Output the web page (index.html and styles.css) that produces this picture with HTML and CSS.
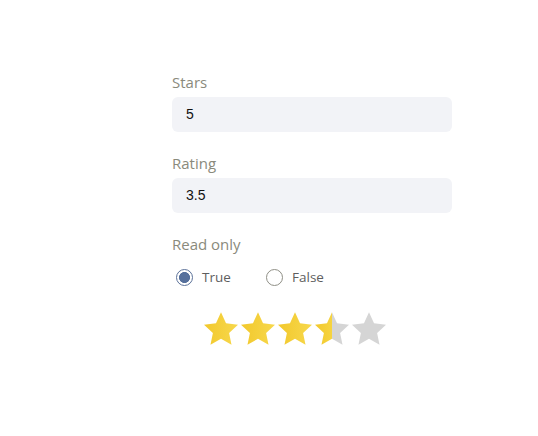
FILE: index.html
```html
<!DOCTYPE html>
<html>
<head>
<meta charset="utf-8">
<link rel="stylesheet" href="styles.css">
</head>
<body>
<div class="form">
  <div class="field">
    <div class="label">Stars</div>
    <div class="input">5</div>
  </div>
  <div class="field">
    <div class="label">Rating</div>
    <div class="input">3.5</div>
  </div>
  <div class="field">
    <div class="label">Read only</div>
    <div class="radios">
      <label class="radio"><span class="dot checked"></span>True</label>
      <label class="radio"><span class="dot"></span>False</label>
    </div>
  </div>
  <div class="stars">
    <svg class="star" viewBox="1.5 1.5 21 20.1"><defs><linearGradient id="g" x1="0" x2="1"><stop offset="0" stop-color="#f2c82c"/><stop offset="1" stop-color="#f7d84c"/></linearGradient><linearGradient id="h" x1="0" x2="1"><stop offset="0" stop-color="#f2c82c"/><stop offset="0.5" stop-color="#f6d440"/><stop offset="0.5" stop-color="#d5d5d5"/><stop offset="1" stop-color="#d5d5d5"/></linearGradient></defs><polygon fill="url(#g)" points="12,1.5 15.1,8.3 22.5,9.2 17,14.3 18.5,21.6 12,17.9 5.5,21.6 7,14.3 1.5,9.2 8.9,8.3"/></svg>
    <svg class="star" viewBox="1.5 1.5 21 20.1"><polygon fill="url(#g)" points="12,1.5 15.1,8.3 22.5,9.2 17,14.3 18.5,21.6 12,17.9 5.5,21.6 7,14.3 1.5,9.2 8.9,8.3"/></svg>
    <svg class="star" viewBox="1.5 1.5 21 20.1"><polygon fill="url(#g)" points="12,1.5 15.1,8.3 22.5,9.2 17,14.3 18.5,21.6 12,17.9 5.5,21.6 7,14.3 1.5,9.2 8.9,8.3"/></svg>
    <svg class="star" viewBox="1.5 1.5 21 20.1"><polygon fill="url(#h)" points="12,1.5 15.1,8.3 22.5,9.2 17,14.3 18.5,21.6 12,17.9 5.5,21.6 7,14.3 1.5,9.2 8.9,8.3"/></svg>
    <svg class="star" viewBox="1.5 1.5 21 20.1"><polygon fill="#d5d5d5" points="12,1.5 15.1,8.3 22.5,9.2 17,14.3 18.5,21.6 12,17.9 5.5,21.6 7,14.3 1.5,9.2 8.9,8.3"/></svg>
  </div>
</div>
</body>
</html>
```
FILE: styles.css
```css
html, body {
  margin: 0;
  padding: 0;
  background: #ffffff;
}
.form {
  display: flex;
  flex-direction: column;
  width: 280px;
  padding: 72px 0 0 172px;
}
.field {
  display: flex;
  flex-direction: column;
  margin-bottom: 21px;
}
.label {
  font-family: "Open Sans", "Noto Sans", sans-serif;
  font-size: 15px;
  line-height: 20px;
  color: #8a8a7c;
  margin-bottom: 5px;
}
.input {
  height: 35px;
  box-sizing: border-box;
  background: #f2f3f7;
  border-radius: 6px;
  padding-left: 14px;
  font-family: "Liberation Sans", Arial, sans-serif;
  font-size: 14px;
  line-height: 35px;
  color: #111;
}
.field:nth-child(3) {
  margin-bottom: 0;
}
.field:nth-child(3) .label {
  margin-bottom: 13px;
}
.radios {
  display: flex;
  height: 20px;
  align-items: center;
  padding-left: 4px;
}
.radio {
  display: flex;
  align-items: center;
  font-family: "Open Sans", "Noto Sans", sans-serif;
  font-size: 13.5px;
  color: #5e5e5e;
  width: 90px;
}
.dot {
  width: 17px;
  height: 17px;
  box-sizing: border-box;
  border-radius: 50%;
  border: 1px solid #8f8f86;
  margin-right: 9px;
  background: #fff;
}
.dot.checked {
  border-color: #5c7299;
  background: radial-gradient(circle, #56709c 0, #56709c 5.2px, #fff 5.8px);
}
.stars {
  display: flex;
  gap: 3px;
  margin: 25px 0 0 32px;
}
.star {
  width: 34px;
  height: 33px;
  display: block;
}
```
